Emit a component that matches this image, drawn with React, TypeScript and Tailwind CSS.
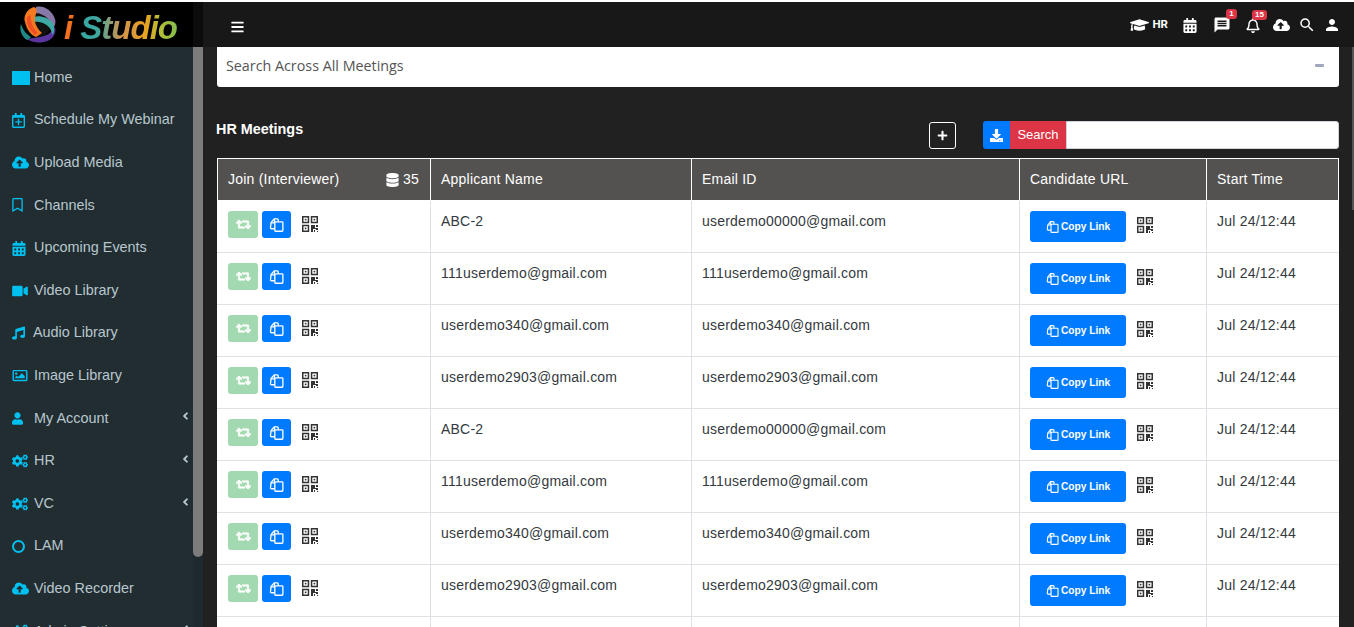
import React from 'react';
import {
  FaAngleLeft,
  FaBars,
  FaCalendarAlt,
  FaCloudUploadAlt,
  FaCogs,
  FaDatabase,
  FaDownload,
  FaGraduationCap,
  FaMusic,
  FaPlus,
  FaRegBell,
  FaRegBookmark,
  FaRegCalendarPlus,
  FaRegImage,
  FaRetweet,
  FaUser,
  FaVideo,
} from 'react-icons/fa';
import { MdMessage, MdPerson, MdSearch } from 'react-icons/md';

const navItems = [
  { label: 'Home', icon: <span className="block w-[18px] h-[14px] bg-[#00c0ef]" /> },
  { label: 'Schedule My Webinar', icon: <FaRegCalendarPlus className="w-[13px] h-[15px]" /> },
  { label: 'Upload Media', icon: <FaCloudUploadAlt className="w-[17px] h-[15px]" /> },
  { label: 'Channels', icon: <FaRegBookmark className="w-[11px] h-[14px]" /> },
  { label: 'Upcoming Events', icon: <FaCalendarAlt className="w-[14px] h-[15px]" /> },
  { label: 'Video Library', icon: <FaVideo className="w-[16px] h-[14px]" /> },
  { label: 'Audio Library', icon: <FaMusic className="w-[13px] h-[14px]" />, shift: true },
  { label: 'Image Library', icon: <FaRegImage className="w-[16px] h-[15px]" /> },
  { label: 'My Account', icon: <FaUser className="w-[11px] h-[13px]" />, sub: true },
  { label: 'HR', icon: <FaCogs className="w-[16px] h-[14px]" />, sub: true },
  { label: 'VC', icon: <FaCogs className="w-[16px] h-[14px]" />, sub: true },
  { label: 'LAM', icon: <span className="block w-[13px] h-[13px] rounded-full border-2 border-[#00c0ef]" /> },
  { label: 'Video Recorder', icon: <FaCloudUploadAlt className="w-[17px] h-[15px]" /> },
  { label: 'Admin Settings', icon: <FaCogs className="w-[16px] h-[14px]" />, sub: true },
];

const meetings = [
  { name: 'ABC-2', email: 'userdemo00000@gmail.com' },
  { name: '111userdemo@gmail.com', email: '111userdemo@gmail.com' },
  { name: 'userdemo340@gmail.com', email: 'userdemo340@gmail.com' },
  { name: 'userdemo2903@gmail.com', email: 'userdemo2903@gmail.com' },
  { name: 'ABC-2', email: 'userdemo00000@gmail.com' },
  { name: '111userdemo@gmail.com', email: '111userdemo@gmail.com' },
  { name: 'userdemo340@gmail.com', email: 'userdemo340@gmail.com' },
  { name: 'userdemo2903@gmail.com', email: 'userdemo2903@gmail.com' },
];

function CopyIcon({ className }: { className?: string }) {
  return (
    <svg viewBox="0 0 16 16" fill="none" stroke="currentColor" strokeWidth="1.4" className={className}>
      <path d="M6 12.5H2.6a1 1 0 0 1-1-1.1L2.2 6l3.4-4h3.2a1 1 0 0 1 1 1.1V5" />
      <path d="M7 5.2h7a.8.8 0 0 1 .8.8v8.4a.8.8 0 0 1-.8.8H7a.8.8 0 0 1-.8-.8V6a.8.8 0 0 1 .8-.8z" />
      <path d="M2.4 6.2h3.4V2.4" />
    </svg>
  );
}

function QrIcon({ className }: { className?: string }) {
  return (
    <svg viewBox="0 0 16 16" className={className} fill="#333">
      <path fillRule="evenodd" d="M0 0h7.2v7.2H0zM1.5 1.5v4.2h4.2V1.5zM8.8 0H16v7.2H8.8zM10.3 1.5v4.2h4.2V1.5zM0 8.8h7.2V16H0zM1.5 10.3v4.2h4.2v-4.2z" />
      <rect x="2.8" y="2.8" width="1.6" height="1.6" />
      <rect x="11.6" y="2.8" width="1.6" height="1.6" />
      <rect x="2.8" y="11.6" width="1.6" height="1.6" />
      <path d="M9 9h4v3h3v2h-2v-1h-3v3H9zM14 9h2v2h-2zM12 14h1v2h-1zM15 15h1v1h-1z" />
    </svg>
  );
}

function LogoMark() {
  return (
    <svg viewBox="0 0 38 37" className="w-[38px] h-[37px] shrink-0">
      <circle cx="19" cy="19" r="12" fill="#111" />
      <path d="M17 1C24-1 33 4 36 13c1 4 0 7-2 9-2-8-8-14-17-15z" fill="#8878a8" />
      <path d="M8 33c6 5 20 5 26-2 2-3 3-6 2-10-3 6-9 9-15 10-5 1-9 1-13 2z" fill="#5a35a0" />
      <path d="M2 18c-2 6 1 13 6 16 2-1 3-2 4-3-5-3-8-7-10-13z" fill="#1f8a86" />
      <path d="M10 13c6-5 18-3 23 3 3 4 3 10 0 13 0-7-6-12-13-13-5-1-9 0-13 3z" fill="#3fa9a5" />
      <path d="M15 1C8 3 4 10 6 16c2 8 6 13 11 15l6-4c-6-5-9-13-6-19 1-3 1-6-2-7z" fill="#f47a20" />
      <path d="M8 11c-1 6 2 13 8 18l3-2c-5-5-8-11-7-18z" fill="#ef4f23" />
    </svg>
  );
}

function Sidebar() {
  return (
    <aside className="w-[203px] shrink-0 flex flex-col h-full">
      <div className="h-[45px] shrink-0 flex">
        <div className="w-[193px] bg-black flex items-center pl-[19px] gap-[7px]">
          <LogoMark />
          <span className="mt-[6px] font-['Liberation_Sans',sans-serif] font-bold italic text-[33px] leading-none whitespace-pre tracking-[-1px] bg-[linear-gradient(90deg,#f4701f_0%,#f4701f_9%,#35a8a4_16%,#3fa7a0_30%,#cf9350_50%,#eaa021_72%,#b4bf35_85%,#84bd4d_100%)] bg-clip-text text-transparent">
            i Studio
          </span>
        </div>
        <div className="w-[10px] bg-[#0b0b0b]" />
      </div>
      <div className="flex flex-1 min-h-0">
        <nav className="w-[193px] bg-[#222d32] pt-[9.4px] overflow-hidden font-['Liberation_Sans',sans-serif] text-[14.4px] text-[#b8c7ce]">
          {navItems.map(item => (
            <div key={item.label} className="h-[42.6px] shrink-0 flex items-center pl-[12px] pr-[4px]">
              <span className="w-[22px] shrink-0 flex items-center text-[#00c0ef]">{item.icon}</span>
              <span className={`flex-1 whitespace-nowrap ${item.shift ? '-ml-px' : ''}`}>{item.label}</span>
              {item.sub && <FaAngleLeft className="w-[7px] h-[12px] -mt-[4px]" />}
            </div>
          ))}
        </nav>
        <div className="w-[10px] bg-[#1f292e]">
          <div className="h-[510px] bg-[#7c7c7c] rounded-b-[5px]" />
        </div>
      </div>
    </aside>
  );
}

function TopBar() {
  return (
    <header className="h-[45px] shrink-0 bg-[#181818] flex items-center text-white pl-[28px] pr-[13px]">
      <FaBars className="w-[13px] h-[14px] mt-[5px]" />
      <div className="ml-auto flex items-center mt-[1px]">
        <FaGraduationCap className="w-[19px] h-[16px]" />
        <span className="ml-[4px] text-[11.5px] font-bold font-['Roboto',sans-serif] leading-none">HR</span>
        <FaCalendarAlt className="ml-[15px] w-[14px] h-[15px]" />
        <div className="relative ml-[15.5px]">
          <MdMessage className="w-[18px] h-[18px]" />
          <span className="absolute -top-[7px] left-[13.5px] w-[11px] h-[10px] rounded-[3px] bg-[#dc3545] text-[8px] font-bold leading-[10px] text-center font-['Liberation_Sans',sans-serif]">1</span>
        </div>
        <div className="relative ml-[15.5px]">
          <FaRegBell className="w-[14px] h-[15px]" />
          <span className="absolute -top-[8px] left-[6px] w-[15px] h-[10px] rounded-[3px] bg-[#dc3545] text-[8px] font-bold leading-[10px] text-center font-['Liberation_Sans',sans-serif]">15</span>
        </div>
        <FaCloudUploadAlt className="ml-[13px] w-[17px] h-[14px]" />
        <MdSearch className="ml-[8px] w-[18px] h-[18px]" />
        <MdPerson className="ml-[7px] w-[18px] h-[18px]" />
      </div>
    </header>
  );
}

function MeetingsTable() {
  return (
    <table className="w-[1121px] table-fixed border-collapse font-['Liberation_Sans',sans-serif] text-[14px] tracking-[0.22px] text-[#343a40]">
      <colgroup>
        <col className="w-[213px]" />
        <col className="w-[261px]" />
        <col className="w-[328px]" />
        <col className="w-[187px]" />
        <col className="w-[132px]" />
      </colgroup>
      <thead>
        <tr className="h-[42px] bg-[#545250] text-white text-left">
          <th className="border border-white font-normal pl-[10px] pr-[11px]">
            <div className="flex items-center">
              <span>Join (Interviewer)</span>
              <FaDatabase className="ml-auto w-[13px] h-[14px]" />
              <span className="ml-[4px]">35</span>
            </div>
          </th>
          <th className="border border-white font-normal px-[10px]">Applicant Name</th>
          <th className="border border-white font-normal px-[10px]">Email ID</th>
          <th className="border border-white font-normal px-[10px]">Candidate URL</th>
          <th className="border border-white font-normal px-[10px]">Start Time</th>
        </tr>
      </thead>
      <tbody className="bg-white">
        {meetings.map((m, i) => (
          <tr key={i} className="h-[52px]">
            <td className="border border-[#dee2e6] border-l-white px-[10px] pt-[10px] align-top">
              <div className="flex items-center">
                <button className="w-[30px] h-[27px] rounded-[3px] bg-[#a3d9b1] text-white flex items-center justify-center">
                  <FaRetweet className="w-[15px] h-[13px]" stroke="currentColor" strokeWidth={24} />
                </button>
                <button className="ml-[4px] w-[29px] h-[27px] rounded-[3px] bg-[#007bff] text-white flex items-center justify-center">
                  <CopyIcon className="w-[15px] h-[15px]" />
                </button>
                <QrIcon className="ml-[11px] -mt-px w-[16px] h-[16px]" />
              </div>
            </td>
            <td className="border border-[#dee2e6] px-[10px] pt-[12px] align-top leading-[17px]">{m.name}</td>
            <td className="border border-[#dee2e6] px-[10px] pt-[12px] align-top leading-[17px]">{m.email}</td>
            <td className="border border-[#dee2e6] px-[10px] pt-[10px] align-top">
              <div className="flex items-center">
                <button className="w-[96px] h-[31px] rounded-[3px] bg-[#007bff] text-white text-[10.2px] font-bold tracking-normal flex items-center justify-center gap-[2px]">
                  <CopyIcon className="w-[13px] h-[13px]" />
                  Copy Link
                </button>
                <QrIcon className="ml-[11px] -mt-[3px] w-[16px] h-[16px]" />
              </div>
            </td>
            <td className="border border-[#dee2e6] border-r-white px-[10px] pt-[12px] align-top leading-[17px]">Jul 24/12:44</td>
          </tr>
        ))}
        {/* next row starts at the bottom of the window, only its cell lines show */}
        <tr className="h-[52px]">
          <td className="border border-[#dee2e6] border-l-white" />
          <td className="border border-[#dee2e6]" />
          <td className="border border-[#dee2e6]" />
          <td className="border border-[#dee2e6]" />
          <td className="border border-[#dee2e6] border-r-white" />
        </tr>
      </tbody>
    </table>
  );
}

export default function App() {
  return (
    <div className="relative w-[1354px] h-[627px] overflow-hidden bg-white pt-[2px]">
      <div className="flex h-[625px]">
        <Sidebar />
        <div className="flex-1 min-w-0 flex flex-col bg-[#212121]">
          <TopBar />
          <main className="pl-[14px] pr-[15px] flex-1 min-h-0 overflow-hidden">
            <div className="h-[40px] bg-white rounded-b-[3px] flex items-center justify-between pl-[9px] pr-[15px] font-['Open_Sans',sans-serif] text-[14.3px] text-[#555]">
              <span className="-mt-[2px]">Search Across All Meetings</span>
              <span className="block w-[9px] h-[3px] rounded-[1px] bg-[#a0a8bc] -mt-[3px]" />
            </div>
            <div className="mt-[34px] flex items-center h-[28px] font-['Liberation_Sans',sans-serif]">
              <h3 className="-ml-px flex-1 text-[14.4px] font-bold text-white -mt-[10px]">HR Meetings</h3>
              <button className="w-[27px] h-[27px] rounded-[3px] border border-white text-white flex items-center justify-center">
                <FaPlus className="w-[11px] h-[11px]" />
              </button>
              <div className="ml-[27px] w-[356px] h-[28px] flex">
                <button className="w-[27px] rounded-l-[3px] bg-[#007bff] text-white flex items-center justify-center">
                  <FaDownload className="w-[13px] h-[13px]" />
                </button>
                <button className="w-[56px] bg-[#dc3545] text-white text-[13px] font-normal">Search</button>
                <div className="flex-1 bg-white rounded-r-[3px] border border-[#ced4da]" />
              </div>
            </div>
            <div className="mt-[9px]">
              <MeetingsTable />
            </div>
          </main>
        </div>
      </div>
      <div className="absolute right-0 top-[47px] w-[2px] h-[163px] bg-[#555]" />
    </div>
  );
}
